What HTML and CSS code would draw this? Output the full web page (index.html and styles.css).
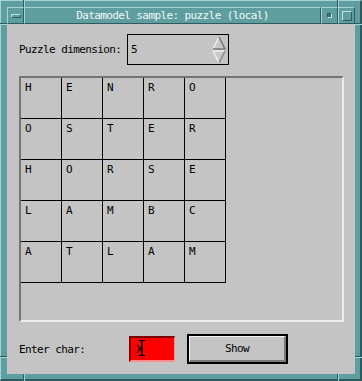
FILE: index.html
```html
<!DOCTYPE html>
<html lang="en">
<head>
    <meta charset="UTF-8">
    <title>Datamodel sample: puzzle (local)</title>
    <link rel="stylesheet" href="styles.css">
</head>
<body>
    <div class="window">
        <span class="notch v top-left"></span>
        <span class="notch v top-right"></span>
        <span class="notch v bottom-left"></span>
        <span class="notch v bottom-right"></span>
        <span class="notch h left-top"></span>
        <span class="notch h right-top"></span>
        <span class="notch h left-bottom"></span>
        <span class="notch h right-bottom"></span>

        <div class="titlebar">
            <div class="tb-btn menu"><span class="menu-bar"></span></div>
            <div class="tb-title">Datamodel sample: puzzle (local)</div>
            <div class="tb-btn min"><span class="min-box"></span></div>
            <div class="tb-btn max"><span class="max-box"></span></div>
        </div>

        <div class="content">
            <div class="dim-row">
                <label class="dim-label">Puzzle dimension:</label>
                <div class="spin">
                    <span class="spin-value">5</span>
                    <svg class="spin-arrows" width="14" height="28" viewBox="0 0 14 28">
                        <polygon points="7,1 13,13 1,13" fill="#c8c8c8"/>
                        <polyline points="1,13 7,1" fill="none" stroke="#eeeeee" stroke-width="1.5"/>
                        <polyline points="7,1 13,13 1,13" fill="none" stroke="#777" stroke-width="1.5"/>
                        <polygon points="1,15 13,15 7,27" fill="#c8c8c8"/>
                        <polyline points="1,15 13,15" fill="none" stroke="#eeeeee" stroke-width="1.5"/>
                        <polyline points="1,15 7,27" fill="none" stroke="#eeeeee" stroke-width="1.5"/>
                        <polyline points="13,15 7,27" fill="none" stroke="#8a8a8a" stroke-width="1.5"/>
                    </svg>
                </div>
            </div>

            <div class="board">
                <div class="grid" id="grid"></div>
            </div>

            <div class="char-row">
                <label class="char-label">Enter char:</label>
                <div class="char-field">
                    <span class="char-text">X</span>
                    <svg class="ibeam" width="7" height="16" viewBox="0 0 7 16">
                        <path d="M0 0.5H6.5M0 15.5H6.5M3.25 0.5V15.5M2.5 0.5V15.5" stroke="#000" stroke-width="1" fill="none"/>
                    </svg>
                </div>
                <button class="show-btn"><span class="show-face">Show</span></button>
            </div>
        </div>
    </div>

    <script>
        //字母表
        const letters = [
            'HENRO',
            'OSTER',
            'HORSE',
            'LAMBC',
            'ATLAM'
        ];
        const grid = document.getElementById('grid');
        letters.forEach(row => {
            row.split('').forEach(ch => {
                const cell = document.createElement('div');
                cell.className = 'cell';
                cell.innerText = ch;
                grid.appendChild(cell);
            });
        });
    </script>
</body>
</html>
```

FILE: styles.css
```css
*{
    padding: 0;
    margin: 0;
    box-sizing: border-box;
}
body{
    background: #5f9ea0;
    font-family: "DejaVu Sans Mono", "Liberation Mono", monospace;
    font-size: 11px;
    letter-spacing: -0.6px;
    color: #000;
}
.window{
    position: relative;
    width: 362px;
    height: 381px;
    display: flex;
    flex-direction: column;
    background: #5f9ea0;
    border-top: 1px solid #a9d2d2;
    border-left: 1px solid #a9d2d2;
    border-right: 2px solid #2e5b5c;
    border-bottom: 2px solid #2e5b5c;
    padding: 6px 5px 5px 6px;
}

/* resize corners */
.notch{
    position: absolute;
    background: #a9d2d2;
}
.notch.v{
    width: 2px;
    height: 7px;
    border-left: 1px solid #2e5b5c;
}
.notch.h{
    width: 7px;
    height: 2px;
    border-top: 1px solid #2e5b5c;
}
.top-left{ left: 22px; top: -1px; }
.top-right{ left: 336px; top: -1px; }
.bottom-left{ left: 22px; top: 373px; }
.bottom-right{ left: 336px; top: 373px; }
.left-top{ left: -1px; top: 22px; }
.right-top{ left: 354px; top: 22px; }
.left-bottom{ left: -1px; top: 355px; }
.right-bottom{ left: 354px; top: 355px; }

/* title bar */
.titlebar{
    display: flex;
    height: 17px;
}
.tb-btn, .tb-title{
    border-top: 1px solid #a9d2d2;
    border-left: 1px solid #a9d2d2;
    border-right: 1px solid #2e5b5c;
    border-bottom: 1px solid #2e5b5c;
    background: #5f9ea0;
}
.tb-btn{
    width: 17px;
    display: flex;
    align-items: center;
    justify-content: center;
}
.tb-title{
    flex: 1;
    color: #f2f8f8;
    text-align: center;
    line-height: 15px;
}
.menu-bar{
    width: 10px;
    height: 4px;
    border-top: 1px solid #c4e2e2;
    border-left: 1px solid #c4e2e2;
    border-right: 1px solid #2e5b5c;
    border-bottom: 1px solid #2e5b5c;
}
.min-box{
    width: 5px;
    height: 5px;
    background: #3f7273;
    border-top: 1px solid #2e5b5c;
    border-left: 1px solid #2e5b5c;
    border-right: 1px solid #c4e2e2;
    border-bottom: 1px solid #c4e2e2;
}
.max-box{
    width: 10px;
    height: 10px;
    border-top: 1px solid #c4e2e2;
    border-left: 1px solid #c4e2e2;
    border-right: 1px solid #2e5b5c;
    border-bottom: 1px solid #2e5b5c;
}

/* content */
.content{
    flex: 1;
    display: flex;
    flex-direction: column;
    background: #c4c4c4;
    padding: 10px 11px 10px 12px;
}
.dim-row{
    display: flex;
    align-items: center;
    height: 31px;
}
.dim-label{
    width: 108px;
}
.spin{
    width: 102px;
    height: 31px;
    border: 1px solid #000;
    display: flex;
    align-items: center;
    justify-content: space-between;
    padding: 0 2px 0 3px;
}
.spin-arrows{
    display: block;
}

.board{
    margin-top: 11px;
    width: 325px;
    height: 246px;
    border-top: 2px solid #747474;
    border-left: 2px solid #747474;
    border-right: 2px solid #ececec;
    border-bottom: 2px solid #ececec;
}
.grid{
    display: grid;
    grid-template-columns: repeat(5, 41px);
    grid-auto-rows: 41px;
}
.cell{
    border-right: 1px solid #000;
    border-bottom: 1px solid #000;
    padding: 3px 0 0 4px;
}

.char-row{
    margin-top: 12px;
    display: flex;
    align-items: center;
    height: 30px;
}
.char-label{
    width: 110px;
}
.char-field{
    position: relative;
    width: 46px;
    height: 26px;
    background: #ff0000;
    border-top: 2px solid #7a0000;
    border-left: 2px solid #7a0000;
    border-right: 1px solid #ff8c8c;
    border-bottom: 2px solid #ff8c8c;
    display: flex;
    align-items: center;
    padding-left: 5px;
}
.ibeam{
    position: absolute;
    left: 8px;
    top: 2px;
}
.show-btn{
    margin-left: 12px;
    width: 101px;
    height: 30px;
    border: 2px solid #000;
    background: #c4c4c4;
    font: inherit;
    letter-spacing: inherit;
    display: flex;
}
.show-face{
    flex: 1;
    display: flex;
    align-items: center;
    justify-content: center;
    border-top: 1px solid #f4f4f4;
    border-left: 1px solid #f4f4f4;
    border-right: 2px solid #7a7a7a;
    border-bottom: 2px solid #7a7a7a;
}
```
